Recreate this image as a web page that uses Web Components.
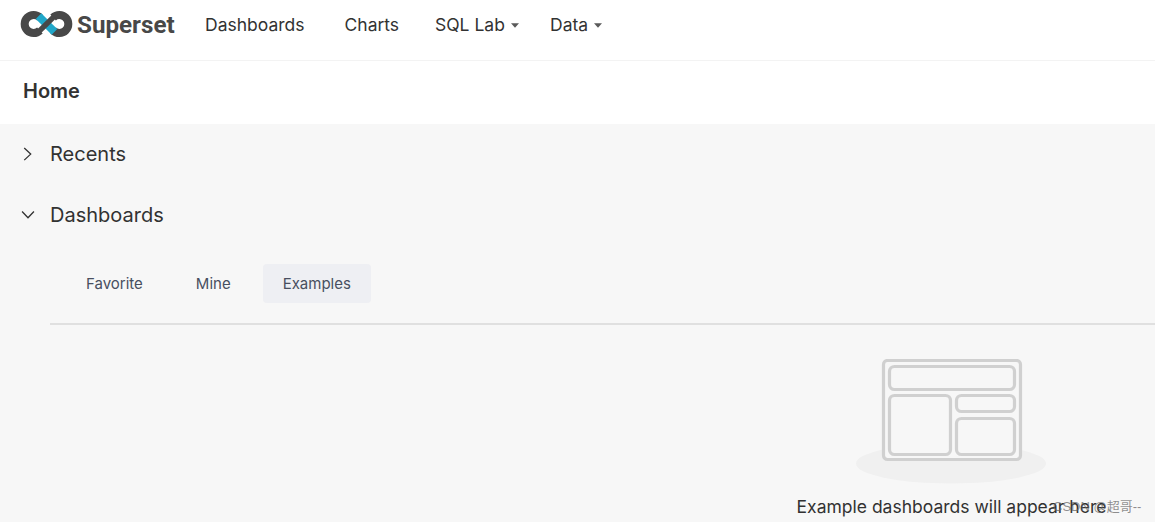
<!DOCTYPE html>
<html>
<head>
<meta charset="utf-8">
<style>
  html, body { margin: 0; height: 100%; overflow: hidden; }
  body { font-family: Inter, "Liberation Sans", sans-serif; color: #323232; background: #f7f7f7; }
</style>
</head>
<body>
<app-nav></app-nav>
<page-title>Home</page-title>
<collapse-row>Recents</collapse-row>
<collapse-row open>Dashboards</collapse-row>
<tab-bar></tab-bar>
<empty-state>Example dashboards will appear here</empty-state>
<water-mark>CSDN @超哥--</water-mark>

<script>
class AppNav extends HTMLElement {
  constructor() {
    super()
    this.attachShadow({ mode: 'open' })
  }

  connectedCallback() {
    const caret = `<svg class="caret" width="8" height="5" viewBox="0 0 8 5"><path d="M0 0.2h8L4 4.8z" fill="#5a5a5a"/></svg>`
    this.shadowRoot.innerHTML = `
      <style>
        :host { display: flex; align-items: center; height: 48px; padding-bottom: 12px; background: #fff; border-bottom: 1px solid #f3f3f3; }
        .logo { display: flex; align-items: center; margin-left: 20px; width: 185px; flex: none; }
        .logo svg { display: block; margin-left: -0.5px; }
        .logo span { margin: 1px 0 0 4.5px; font-family: Roboto, sans-serif; font-weight: 700; font-size: 24.2px; color: #484848; }
        a { display: flex; align-items: center; font-size: 17.5px; color: #323232; white-space: nowrap; }
        .caret { margin-left: 6px; margin-top: 3px; }
      </style>
      <div class="logo">
        <svg width="53" height="28" viewBox="0 0 53 28">
          <path d="M19.9 7.5 A9 9 0 1 0 19.9 20.5 M33.1 7.5 A9 9 0 1 1 33.1 20.5" fill="none" stroke="#484848" stroke-width="8"/>
          <path d="M18.5 6.1 L26.5 14 L34.5 21.9" fill="none" stroke="#20a7c9" stroke-width="8"/>
          <path d="M19 21.4 L34 6.6" fill="none" stroke="#484848" stroke-width="5.5"/>
        </svg>
        <span>Superset</span>
      </div>
      <a style="width:139.5px">Dashboards</a>
      <a style="width:90.5px">Charts</a>
      <a style="width:115px">SQL Lab ${caret}</a>
      <a>Data ${caret}</a>
    `
  }
}

class PageTitle extends HTMLElement {
  constructor() {
    super()
    this.attachShadow({ mode: 'open' })
    this.shadowRoot.innerHTML = `
      <style>
        :host { display: flex; align-items: center; height: 59px; padding: 0 0 4px 23px; background: #fff; font-size: 20px; font-weight: 600; color: #323232; }
      </style>
      <slot></slot>
    `
  }
}

class CollapseRow extends HTMLElement {
  constructor() {
    super()
    this.attachShadow({ mode: 'open' })
  }

  connectedCallback() {
    const icon = this.hasAttribute('open')
      ? '<path d="M1 1.2 L6.5 7 L12 1.2" />'
      : '<path d="M3 -2 L9 3.6 L3 9.2" transform="translate(0 1)"/>'
    this.shadowRoot.innerHTML = `
      <style>
        :host { display: flex; align-items: center; height: 59px; padding-bottom: 2px; font-size: 20px; color: #323232; }
        svg { width: 14px; height: 14px; margin-left: 21px; margin-right: 15px; flex: none; overflow: visible; }
        path { fill: none; stroke: #323232; stroke-width: 1.2; }
      </style>
      <svg viewBox="0 -2 13 13">${icon}</svg>
      <slot></slot>
    `
  }
}

class TabBar extends HTMLElement {
  constructor() {
    super()
    this.attachShadow({ mode: 'open' })
    this.shadowRoot.innerHTML = `
      <style>
        :host { display: block; margin-left: 50px; padding-top: 18px; height: 59px; border-bottom: 2px solid #e0e0e0; }
        .tabs { display: flex; gap: 13px; }
        .tab { height: 39px; display: flex; align-items: center; padding: 0 20px; border-radius: 4px; font-size: 15px; color: #484f60; }
        .tab.first { padding-left: 36px; }
        .tab.active { background: #eeeff3; margin-left: -1px; }
      </style>
      <div class="tabs">
        <div class="tab first">Favorite</div>
        <div class="tab">Mine</div>
        <div class="tab active">Examples</div>
      </div>
    `
  }
}

class EmptyState extends HTMLElement {
  constructor() {
    super()
    this.attachShadow({ mode: 'open' })
    this.shadowRoot.innerHTML = `
      <style>
        :host { display: flex; flex-direction: column; align-items: center; margin-left: 747px; width: 408px; }
        svg { display: block; margin-top: 34px; }
        p { margin: 9px 0 0 1px; font-size: 17.5px; line-height: 28px; color: #323232; white-space: nowrap; }
      </style>
      <svg width="190" height="125" viewBox="0 0 190 125">
        <ellipse cx="95" cy="104.5" rx="95" ry="20" fill="#f0f0f0"/>
        <g fill="none" stroke="#d0d0d0" stroke-width="3.2">
          <rect x="27.5" y="1.5" width="137" height="99" rx="4" fill="#f7f7f7"/>
          <rect x="33.5" y="7.5" width="125" height="23" rx="5"/>
          <rect x="33.5" y="36.5" width="61" height="59" rx="5"/>
          <rect x="100.5" y="36.5" width="58" height="16" rx="5"/>
          <rect x="100.5" y="59.5" width="58" height="36" rx="5"/>
        </g>
      </svg>
      <p><slot></slot></p>
    `
  }
}

class WaterMark extends HTMLElement {
  constructor() {
    super()
    this.attachShadow({ mode: 'open' })
    this.shadowRoot.innerHTML = `
      <style>
        :host { position: absolute; left: 1053px; top: 498px; font-family: "Liberation Sans", "Noto Sans CJK SC", sans-serif; font-size: 13px; line-height: 18px; color: rgba(100,100,100,0.72); white-space: nowrap; }
      </style>
      <slot></slot>
    `
  }
}

customElements.define('app-nav', AppNav)
customElements.define('page-title', PageTitle)
customElements.define('collapse-row', CollapseRow)
customElements.define('tab-bar', TabBar)
customElements.define('empty-state', EmptyState)
customElements.define('water-mark', WaterMark)
</script>
</body>
</html>
